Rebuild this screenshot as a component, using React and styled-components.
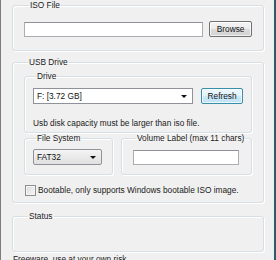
import React from "react";
import styled, { createGlobalStyle } from "styled-components";

const GlobalStyle = createGlobalStyle`
  html, body {
    margin: 0;
    padding: 0;
    background: #f0f0f0;
  }
  body {
    font-family: "Liberation Sans", Arial, sans-serif;
    font-size: 8.3px;
    color: #1a1a1a;
  }
`;

const Frame = styled.div`
  box-sizing: border-box;
  width: 276px;
  height: 260px;
  overflow: hidden;
  background: #f0f0f0;
  border-left: 1px solid #7d7d7d;
  border-right: 2px solid #2e5b66;
  box-shadow: inset -1px 0 0 #e2f3f8;
  padding: 0 10px 0 11px;
  display: flex;
  flex-direction: column;
`;

const Group = styled.fieldset`
  margin: ${(p) => p.$mt || 0}px 0 0 0;
  padding: ${(p) => p.$pad || "0"};
  border: 1px solid #d5dfe5;
  border-radius: 3px;
  box-shadow: inset 1px 1px 0 #fff, 1px 1px 0 #fff;
  min-width: 0;
  width: ${(p) => (p.$w ? `${p.$w}px` : "auto")};
  box-sizing: border-box;
`;

const Legend = styled.legend`
  margin-left: ${(p) => p.$ml || 4}px;
  padding: 0 1px;
  line-height: 10px;
  height: 10px;
  font-size: 8.3px;
  white-space: nowrap;
  color: #1a1a1a;
`;

const Row = styled.div`
  display: flex;
  align-items: ${(p) => p.$align || "center"};
  gap: ${(p) => p.$gap || 0}px;
`;

const TextBox = styled.div`
  box-sizing: border-box;
  width: ${(p) => p.$w}px;
  height: 15px;
  background: #fff;
  border: 1px solid #abadb3;
  border-top-color: #8f9399;
`;

const Button = styled.div`
  box-sizing: border-box;
  width: ${(p) => p.$w}px;
  height: 16px;
  display: flex;
  align-items: center;
  justify-content: center;
  border: 1px solid ${(p) => (p.$focus ? "#3a8fa8" : "#707070")};
  border-radius: 2px;
  background: ${(p) =>
    p.$focus
      ? "linear-gradient(#eef8fd 0%, #e0f2fc 50%, #cbe9f9 50%, #bfe3f6 100%)"
      : "linear-gradient(#f4f4f4 0%, #ebebeb 50%, #dddddd 50%, #d2d2d2 100%)"};
  box-shadow: inset 0 0 0 1px rgba(255, 255, 255, 0.7);
  font-size: 8.3px;
  color: #111;
`;

const Combo = styled.div`
  box-sizing: border-box;
  width: ${(p) => p.$w}px;
  height: 16px;
  display: flex;
  align-items: center;
  justify-content: space-between;
  padding: 0 3px;
  background: ${(p) => (p.$raised ? "linear-gradient(#f4f4f4, #e0e0e0)" : "#fff")};
  border: 1px solid #8f9399;
  border-radius: ${(p) => (p.$raised ? "2px" : "0")};
  font-size: 8.3px;
  color: #111;
`;

const Arrow = styled.span`
  width: 0;
  height: 0;
  border-left: 3px solid transparent;
  border-right: 3px solid transparent;
  border-top: 3px solid #111;
  margin-right: 2px;
`;

const Hint = styled.div`
  margin-top: 14px;
  line-height: 11px;
`;

const Check = styled.span`
  box-sizing: border-box;
  width: 11px;
  height: 11px;
  border: 1px solid #8e8f8f;
  background: linear-gradient(135deg, #dcdcdc, #f6f6f6);
  box-shadow: inset 0 0 0 1px #f4f4f4;
`;

const CheckRow = styled(Row)`
  margin: 10px 0 0 1px;
  line-height: 11px;
`;

const Footer = styled.div`
  margin-top: 2px;
  padding-left: 1px;
  line-height: 11px;
  white-space: nowrap;
`;

export default function App() {
  return (
    <>
      <GlobalStyle />
      <Frame>
        <Group $pad="11px 11px 13px 11px">
          <Legend $ml={5}>ISO File</Legend>
          <Row $gap={6}>
            <TextBox $w={180} />
            <Button $w={43}>Browse</Button>
          </Row>
        </Group>

        <Group $mt={6} $pad="4px 11px 6px 11px">
          <Legend $ml={4}>USB Drive</Legend>
          <Group $pad="7px 8px 3px 8px">
            <Legend $ml={3}>Drive</Legend>
            <Row $gap={8}>
              <Combo $w={161}>
                <span>F: [3.72 GB]</span>
                <Arrow />
              </Combo>
              <Button $w={42} $focus>
                Refresh
              </Button>
            </Row>
            <Hint>Usb disk capacity must be larger than iso file.</Hint>
          </Group>
          <Row $gap={8} $align="stretch">
            <Group $w={89} $pad="6px 8px 9px 8px">
              <Legend $ml={3}>File System</Legend>
              <Combo $w={69} $raised>
                <span>FAT32</span>
                <Arrow />
              </Combo>
            </Group>
            <Group $w={131} $pad="7px 12px 9px 11px">
              <Legend $ml={3}>Volume Label (max 11 chars)</Legend>
              <TextBox $w={106} />
            </Group>
          </Row>
          <CheckRow $gap={2}>
            <Check />
            <span>Bootable, only supports Windows bootable ISO image.</span>
          </CheckRow>
        </Group>

        <Group $mt={8} $pad="0 11px 30px 11px">
          <Legend $ml={4}>Status</Legend>
        </Group>

        <Footer>Freeware, use at your own risk.</Footer>
      </Frame>
    </>
  );
}
